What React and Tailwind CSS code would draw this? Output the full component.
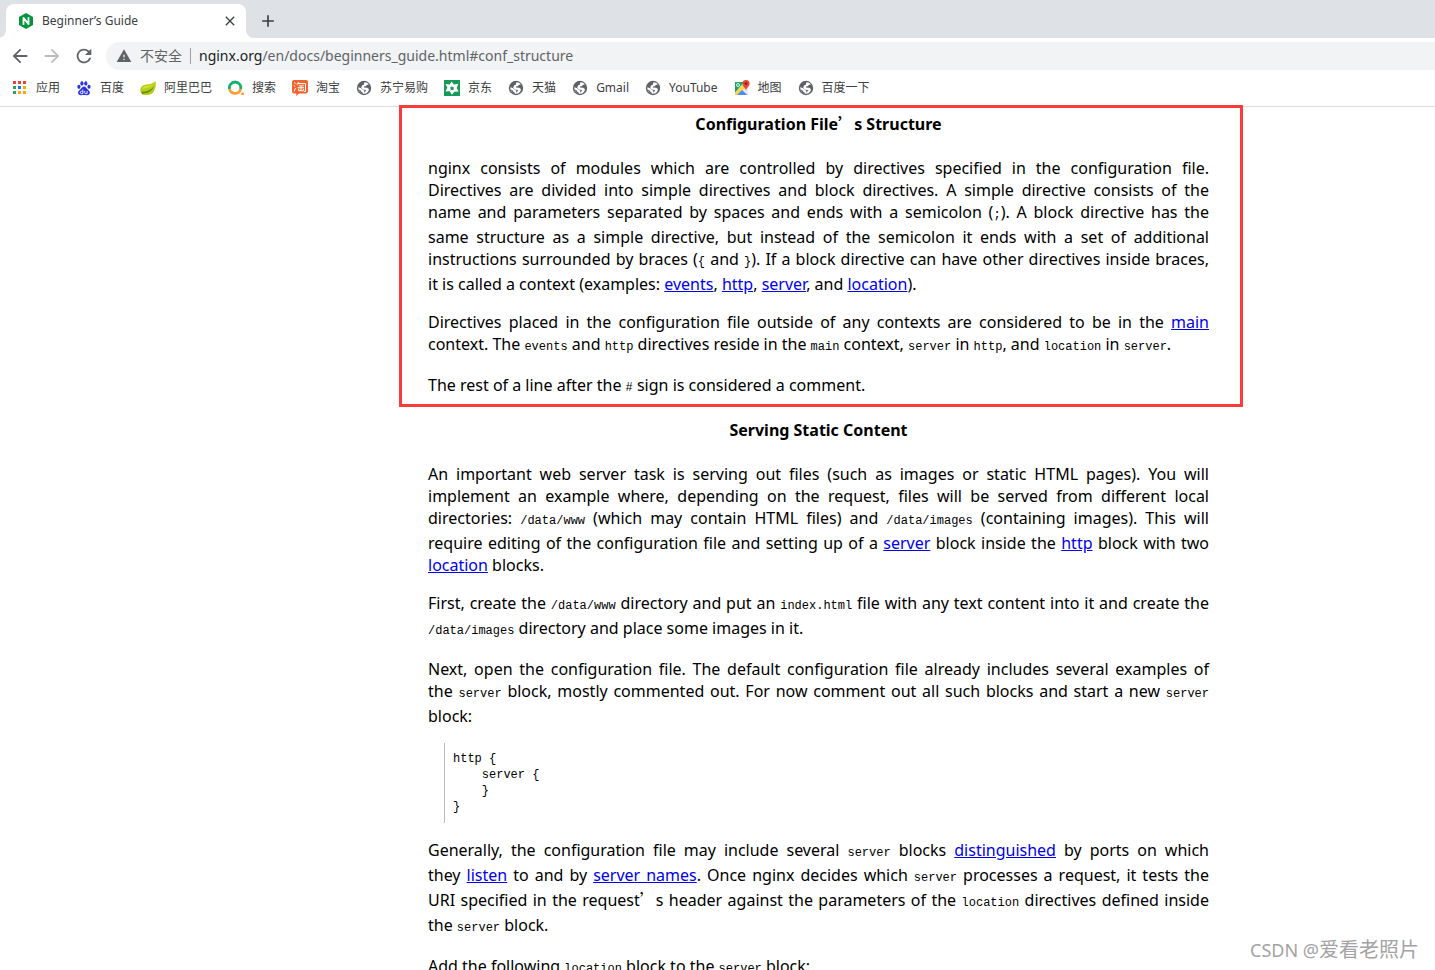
import { MdAdd, MdArrowBack, MdArrowForward, MdClose, MdRefresh, MdWarning } from 'react-icons/md'

/* Icons */

const NginxIcon = () => (
  <svg width="16" height="16" viewBox="0 0 16 16">
    <path d="M8 0l7 4v8l-7 4-7-4V4z" fill="#009639" />
    <path d="M5.5 11.2V4.9l5 6.2V4.8" fill="none" stroke="#fff" strokeWidth="1.8" strokeLinejoin="round" strokeLinecap="round" />
  </svg>
)

const AppsIcon = () => (
  <svg width="16" height="16" viewBox="0 0 16 16">
    <path d="M1 1h3v3H1zM6 1h3v3H6zM11 1h3v3h-3z" fill="#ea4335" />
    <path d="M1 6h3v3H1zM1 11h3v3H1z" fill="#34a060" />
    <path d="M6 6h3v3H6z" fill="#1a73e8" />
    <path d="M11 6h3v3h-3zM6 11h3v3H6zM11 11h3v3h-3z" fill="#fbab05" />
  </svg>
)

const BaiduIcon = () => (
  <svg width="16" height="16" viewBox="0 0 16 16">
    <g fill="#2932e1">
      <ellipse cx="2.9" cy="6.8" rx="1.6" ry="2.1" />
      <ellipse cx="5.9" cy="3.4" rx="1.6" ry="2.2" />
      <ellipse cx="9.8" cy="3.4" rx="1.6" ry="2.2" />
      <ellipse cx="13" cy="6.8" rx="1.6" ry="2" />
      <path d="M8 6.6c1.6 0 2.2 1.6 3.4 2.6 1.4 1.1 2.6 2 2.4 3.8-.2 1.7-1.6 2.3-3 2.2-1-.1-1.8-.2-2.8-.2s-1.8.1-2.8.2c-1.5.1-2.9-.5-3.1-2.2-.2-1.8 1.1-2.7 2.4-3.8C5.7 8.2 6.4 6.6 8 6.6z" />
    </g>
    <path d="M6.9 9.6v4H5.3c-1.4 0-1.4-2.3 0-2.3h1.4M8.7 11v1.8c0 .6.4.8.9.8h1.5V11" fill="none" stroke="#fff" strokeWidth="0.9" />
  </svg>
)

const LeafIcon = () => (
  <svg width="16" height="16" viewBox="0 0 16 16">
    <path d="M15.6 1c.4 4 .1 8.4-2.6 11.4-2.3 2.6-6.8 3.2-10.7 2L.6 12C-.6 7.5 2.4 5 6.4 4.6 10.4 4.3 13.5 3.4 15.6 1z" fill="#b5cc18" />
    <path d="M1.4 11.8c4.8.4 9.2-1.3 12.4-5.3-1.6 4.6-6.1 7-10.9 6.9l-.7 1.2z" fill="#5c8a1c" />
    <path d="M2 9c.8-2.4 3-3 5.4-3.2 2.4-.2 4.3-.6 6-1.5C11.6 7.4 7 8 2 9z" fill="#d3df35" />
  </svg>
)

const SearchIcon = () => (
  <svg width="16" height="16" viewBox="0 0 16 16">
    <path d="M1.6 9.2A5.7 5.7 0 1 1 12.6 9.2" fill="none" stroke="#12b26b" strokeWidth="2.8" />
    <path d="M1.6 9.2A5.7 5.7 0 0 0 12.6 9.2" fill="none" stroke="#ff9e36" strokeWidth="2.8" />
    <circle cx="14.5" cy="13.8" r="1.5" fill="#ff9e36" />
  </svg>
)

const TaobaoIcon = () => (
  <svg width="16" height="16" viewBox="0 0 16 16">
    <path d="M2 0h12a2 2 0 0 1 2 2v9.5a2 2 0 0 1-2 2H7L4.3 16v-2.5H2a2 2 0 0 1-2-2V2a2 2 0 0 1 2-2z" fill="#f4622d" />
    <path d="M2 2.5l1.5 1M1.7 5.5l1.5 1M2 11.5l1.6-3.5M6.5 2L5 4.8M6 3.6h7.5v7.9H12M6.7 5.8h5M5.5 7.8h6.5M9 5.8v4.7M6.6 9v1.7h5V9" fill="none" stroke="#fff" />
  </svg>
)

const GlobeIcon = () => (
  <svg width="16" height="16" viewBox="0 0 16 16">
    <circle cx="8" cy="8" r="7.2" fill="#5f6368" />
    <path d="M8.4 2.3c2 0 3.5.7 4.6 2l-2.3.6-.6 1.2-2 .4-.3 1 3.4.3 1.7 1.2-.4 2.3-2 1.9-2 .6v-1.6l1.5-1.2-.3-1.1-3.6-.5-.8-2L6 5.5l1.8-.7z" fill="#fff" />
    <path d="M2.2 7.2l3 1 1.2 1.6 1.8.8.4 3.2c-3.500 0-6.300-2.500-6.400-6.600z" fill="#fff" />
    <path d="M2.400 9.200l2.300 1.400.8 1.500 1.500.6.1 1.200-2.400-.8z" fill="#5f6368" />
  </svg>
)

const JdIcon = () => (
  <svg width="16" height="16" viewBox="0 0 16 16">
    <path d="M0 0h16v16H0z" fill="#159a57" />
    <path d="M7.6 1.6l2.2 3 4.6-.8-1.7 4.1 2 3.7-4.3.1-2.6 3-2-3.4-4.3.3 1.8-4L1.5 4l4.2.5z" fill="#fff" />
    <path d="M7.9 6l.8 1.3 1.5.1-.8 1.4.5 1.5-1.8-.5-1.6.6.3-1.6-1-1.2 1.5-.3z" fill="#159a57" />
  </svg>
)

const MapsIcon = () => (
  <svg width="16" height="16" viewBox="0 0 16 16">
    <path d="M1 2h13v13H1z" fill="#e8eaed" />
    <path d="M1 2h9L1 13z" fill="#1fa463" />
    <path d="M1 12.5L10.5 3l2.5 3-9.500 9H1z" fill="#fdd548" />
    <path d="M3 15l5-5 5.5 5z" fill="#4d8df6" />
    <circle cx="4" cy="5" r="1.5" fill="none" stroke="#fff" strokeWidth="0.9" />
    <path d="M12 0a3.6 3.6 0 0 1 3.6 3.6c0 2.6-2.6 3.4-3.6 7-1-3.6-3.6-4.4-3.6-7A3.6 3.6 0 0 1 12 0z" fill="#ea4335" />
    <circle cx="12" cy="3.6" r="1.3" fill="#8c1d18" />
  </svg>
)

const bookmarks = [
  { label: '应用', Icon: AppsIcon },
  { label: '百度', Icon: BaiduIcon },
  { label: '阿里巴巴', Icon: LeafIcon },
  { label: '搜索', Icon: SearchIcon },
  { label: '淘宝', Icon: TaobaoIcon },
  { label: '苏宁易购', Icon: GlobeIcon },
  { label: '京东', Icon: JdIcon },
  { label: '天猫', Icon: GlobeIcon },
  { label: 'Gmail', Icon: GlobeIcon },
  { label: 'YouTube', Icon: GlobeIcon },
  { label: '地图', Icon: MapsIcon },
  { label: '百度一下', Icon: GlobeIcon },
]

/* Browser chrome */

function TabStrip() {
  return (
    <div className="flex h-[38px] shrink-0 items-end bg-[#dee1e6] px-1.5">
      <div className="relative flex h-[34px] w-60 items-center gap-2 rounded-t-lg bg-white pl-3 pr-2">
        <NginxIcon />
        <span className="flex-1 text-xs text-[#3c4043]">Beginner’s Guide</span>
        <button aria-label="Close tab" className="text-[#3c4043]">
          <MdClose size={16} />
        </button>
        <svg className="absolute bottom-0 left-full" width="8" height="8" viewBox="0 0 8 8">
          <path d="M0 0v8h8a8 8 0 0 1-8-8z" fill="#fff" />
        </svg>
        <svg className="absolute right-full bottom-0" width="8" height="8" viewBox="0 0 8 8">
          <path d="M8 0v8H0a8 8 0 0 0 8-8z" fill="#fff" />
        </svg>
      </div>
      <button aria-label="New tab" className="ml-3 flex h-[34px] items-center text-[#3c4043]">
        <MdAdd size={20} />
      </button>
    </div>
  )
}

function Toolbar() {
  return (
    <div className="flex h-9 shrink-0 items-center pl-[9px] text-[#5f6368]">
      <div className="flex items-center gap-2.5">
        <button aria-label="Back"><MdArrowBack size={22} /></button>
        <button aria-label="Forward" className="text-[#babcbe]"><MdArrowForward size={22} /></button>
        <button aria-label="Reload"><MdRefresh size={22} /></button>
      </div>
      <div className="ml-[11px] flex h-7 flex-1 items-center rounded-l-full bg-[#f1f3f4] pl-2.5 text-sm">
        <MdWarning size={16} />
        <span className="ml-2">不安全</span>
        <span className="mx-2 h-4 w-px bg-[#9aa0a6]" />
        <a href="#conf_structure">
          <span className="text-[#202124]">nginx.org</span>/en/docs/beginners_guide.html#conf_structure
        </a>
      </div>
    </div>
  )
}

function Bookmarks() {
  return (
    <nav className="flex shrink-0 gap-4 border-b border-[#dadce0] px-3 pb-1 text-xs text-[#3c4043]">
      {bookmarks.map(({ label, Icon }) => (
        <a key={label} href="#bookmark" className="flex h-7 items-center gap-2 whitespace-nowrap">
          <Icon />
          {label}
        </a>
      ))}
    </nav>
  )
}

/* Document */

const Code = ({ children }) => (
  <code className="font-['Liberation_Mono',monospace] text-xs/[21px]">{children}</code>
)

const Link = ({ children }) => (
  <a href="#directive" className="text-[#0000ee] underline">{children}</a>
)

// full-width apostrophe
const Apos = () => <span className="font-['Noto_Sans_CJK_SC',sans-serif] leading-none">’</span>

const Heading = ({ children }) => <h2 className="mb-[22px] text-center font-bold">{children}</h2>

export default function App() {
  return (
    <div className="relative flex h-screen flex-col overflow-hidden bg-white font-['Noto_Sans','Noto_Sans_CJK_SC',sans-serif]">
      <TabStrip />
      <Toolbar />
      <Bookmarks />

      <main className="min-h-0 flex-1 pl-[202px]">
        <article className="mx-auto max-w-[781px] pt-1.5 text-justify text-base/[22px] text-black">
          <section id="conf_structure" className="relative mb-5">
            <div className="pointer-events-none absolute -top-2 -right-[34px] -bottom-2 -left-[29px] border-3 border-[#fb3b3b]" />
            <Heading>Configuration File<Apos />s Structure</Heading>
            <p className="mb-4">
              nginx consists of modules which are controlled by directives specified in the configuration file.
              Directives are divided into simple directives and block directives. A simple directive consists of
              the name&nbsp;and parameters separated by spaces and ends with a semicolon (<Code>;</Code>). A block
              directive has the same&nbsp;structure as a simple directive, but instead of the semicolon it ends
              with a set of additional instructions&nbsp;surrounded by braces (<Code>{'{'}</Code>{' '}
              and <Code>{'}'}</Code>). If a block directive can have other directives inside braces,
              it&nbsp;is&nbsp;called a context (examples:{' '}
              <Link>events</Link>, <Link>http</Link>, <Link>server</Link>, and <Link>location</Link>).
            </p>
            <p className="mb-4">
              Directives placed in the configuration file outside of any contexts are considered to be in the{' '}
              <Link>main</Link> context. The <Code>events</Code> and <Code>http</Code> directives reside in
              the <Code>main</Code> context, <Code>server</Code> in <Code>http</Code>,
              and <Code>location</Code> in <Code>server</Code>.
            </p>
            <p>
              The rest of a line after the <Code>#</Code> sign is considered a comment.
            </p>
          </section>

          <section>
            <Heading>Serving Static Content</Heading>
            <p className="mb-4">
              An important web server task is serving out files (such as images or static HTML pages). You will
              implement an example where, depending on the request, files will be served from different local
              directories: <Code>/data/www</Code> (which may contain HTML files)
              and <Code>/data/images</Code> (containing images). This will require editing of the configuration
              file and setting up of a <Link>server</Link> block inside the <Link>http</Link> block with
              two <Link>location</Link> blocks.
            </p>
            <p className="mb-4">
              First, create the <Code>/data/www</Code> directory and put an <Code>index.html</Code> file with any
              text content into it and create the <Code>/data/images</Code> directory and place some images in it.
            </p>
            <p className="mb-4">
              Next, open the configuration file. The default configuration file already includes several examples
              of the&nbsp;<Code>server</Code> block, mostly commented out. For now comment out all such blocks and
              start a new <Code>server</Code> block:
            </p>
            <pre className="mb-4 ml-4 border-l border-[#bbbbbb] p-2 font-['Liberation_Mono',monospace] text-xs leading-4">
              {'http {\n    server {\n    }\n}'}
            </pre>
            <p className="mb-4">
              Generally, the configuration file may include several <Code>server</Code>{' '}
              blocks <Link>distinguished</Link> by ports on which they&nbsp;<Link>listen</Link> to and
              by <Link>server names</Link>. Once nginx decides which <Code>server</Code> processes a request, it
              tests the URI&nbsp;specified in the request<Apos />s header against the parameters of
              the <Code>location</Code> directives defined inside the&nbsp;<Code>server</Code> block.
            </p>
            <p>
              Add the following <Code>location</Code> block to the <Code>server</Code> block:
            </p>
          </section>
        </article>
      </main>

      <span className="absolute right-4 bottom-1.5 text-lg text-[#a3a3a3]">
        CSDN @<span className="text-xl">爱看老照片</span>
      </span>
    </div>
  )
}
